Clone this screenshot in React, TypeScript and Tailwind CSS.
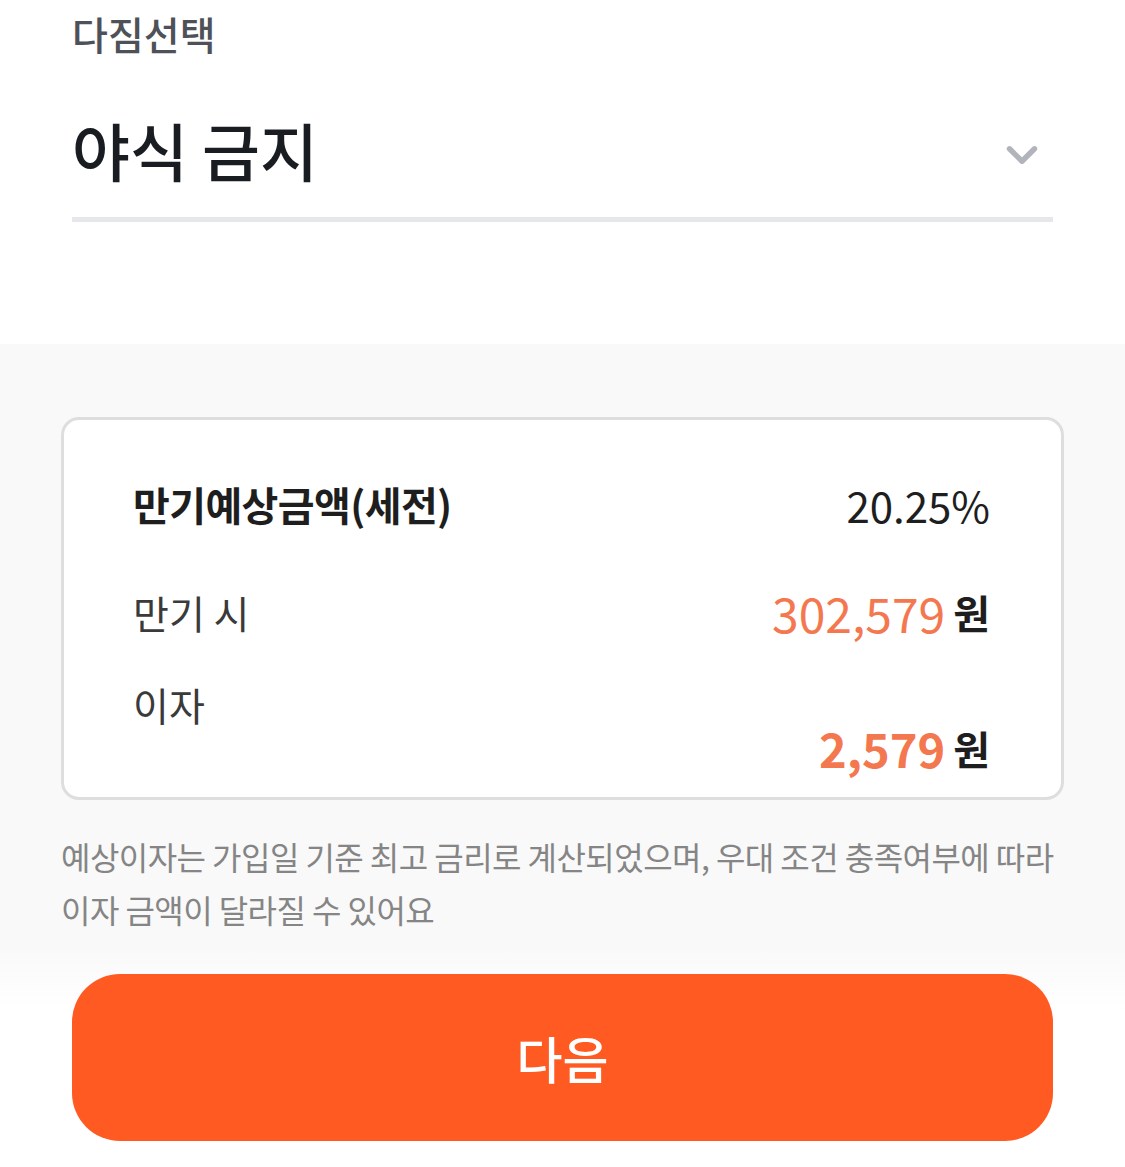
import { ChevronDown } from "lucide-react"

const font = { fontFamily: '"Noto Sans CJK KR", "Noto Sans", sans-serif' }

export default function App() {
  return (
    <div className="w-[1125px] h-[1167px] bg-white overflow-hidden flex flex-col" style={font}>
      {/* 상단 선택 영역 */}
      <div className="h-[344px] px-[72px] pt-[4px]">
        <div className="text-[39px] leading-[58px] text-[#4e5158] font-medium">다짐선택</div>
        <div className="mt-[40px] flex items-center justify-between h-[120px] border-b-[5px] border-[#e6e7eb]">
          <span className="text-[63px] leading-[80px] text-[#191c21] font-medium -mt-[22px]">야식 금지</span>
          <ChevronDown className="w-[50px] h-[50px] text-[#b1b4bb] mr-[6px] -mt-[10px]" strokeWidth={2.6} />
        </div>
      </div>

      {/* 결과 영역 */}
      <div className="flex-1 bg-[#f9f9f9] flex flex-col">
        <div className="mt-[73px] mx-[61px] h-[383px] bg-white border-[3px] border-[#dedede] rounded-[18px] pl-[69px] pr-[71px] pt-[56px]">
          <div className="flex items-center justify-between h-[56px]">
            <span className="text-[40px] font-bold text-[#1e1e1e] tracking-[-0.015em]">만기예상금액(세전)</span>
            <span className="text-[42px] text-[#1e1e1e]">20.25%</span>
          </div>
          <div className="flex items-center justify-between h-[56px] mt-[52px]">
            <span className="text-[39px] text-[#3a3a3a]">만기 시</span>
            <span className="flex items-center gap-[8px]">
              <span className="text-[48px] text-[#f4784f]">302,579</span>
              <span className="text-[40px] font-bold text-[#1e1e1e]">원</span>
            </span>
          </div>
          <div className="flex items-start justify-between mt-[36px]">
            <span className="text-[39px] leading-[56px] text-[#3a3a3a]">이자</span>
            <span className="flex items-center gap-[8px] mt-[42px]">
              <span className="text-[47px] leading-[60px] font-bold text-[#f4784f]">2,579</span>
              <span className="text-[40px] leading-[60px] font-bold text-[#1e1e1e]">원</span>
            </span>
          </div>
        </div>

        <p className="ml-[61px] mt-[30px] text-[32px] leading-[53px] text-[#858585] tracking-[-0.017em] whitespace-nowrap">
          예상이자는 가입일 기준 최고 금리로 계산되었으며, 우대 조건 충족여부에 따라
          <br />
          이자 금액이 달라질 수 있어요
        </p>

        <div className="mt-auto bg-gradient-to-b from-[#f9f9f9] to-white to-[30%] pt-[28px] pb-[26px] px-[72px]">
          <button className="w-full h-[167px] rounded-[48px] bg-[#ff5a22] text-white text-[50px] font-medium">
            다음
          </button>
        </div>
      </div>
    </div>
  )
}
